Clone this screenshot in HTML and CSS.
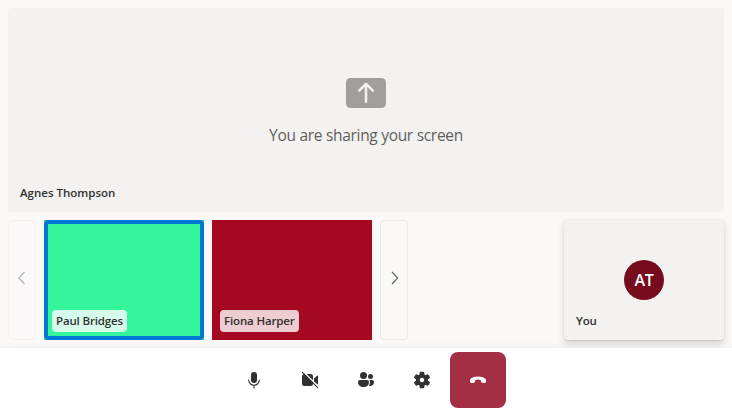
FILE: index.html
```html
<!DOCTYPE html>
<html lang="en">
<head>
<meta charset="utf-8">
<title>Call</title>
<link rel="stylesheet" href="styles.css">
</head>
<body>
<main class="call">
  <section class="stage">
    <div class="sharing">
      <svg class="share-icon" width="40" height="30" viewBox="0 0 40 30"><rect width="40" height="30" rx="4.5" fill="#a19f9d"/><path d="M20 23.8V6.2M13.2 12.6 20 5.8l6.8 6.8" fill="none" stroke="#f3f2f1" stroke-width="2.5" stroke-linecap="round" stroke-linejoin="round"/></svg>
      <p class="sharing-text">You are sharing your screen</p>
    </div>
    <span class="name stage-name">Agnes Thompson</span>
  </section>
  <section class="gallery">
    <button class="pager pager-off" aria-label="Previous"><svg width="9" height="14" viewBox="0 0 9 14"><path d="M6.500 1 .8 7l5.700 6"/></svg></button>
    <article class="tile tile-green"><span class="name badge">Paul Bridges</span></article>
    <article class="tile tile-red"><span class="name badge">Fiona Harper</span></article>
    <button class="pager" aria-label="Next"><svg width="9" height="14" viewBox="0 0 9 14"><path d="m2 1 5.700 6L2 13"/></svg></button>
    <article class="self"><span class="avatar">AT</span><span class="name self-name">You</span></article>
  </section>
  <nav class="controls">
    <button class="control" aria-label="Microphone"><svg width="20" height="20" viewBox="0 0 20 20"><rect x="7" y="2" width="6" height="11" rx="3" fill="#323130"/><path d="M4.700 10a5.300 5.300 0 0 0 10.600 0M10 15.300V18" fill="none" stroke="#323130" stroke-width="1.100" stroke-linecap="round"/></svg></button>
    <button class="control" aria-label="Camera off"><svg width="20" height="20" viewBox="0 0 20 20"><rect x="2" y="4" width="11" height="12" rx="2.500" fill="#323130"/><path d="m14 8.200 3.200-2.500q.8-.5.8.4v7.800q0 .9-.8.4L14 11.800Z" fill="#323130"/><path d="m3.400 1.700 15 15" stroke="#fff" stroke-width="1.500"/><path d="m2.400 2.400 15.300 15.300" stroke="#323130" stroke-width="1.100" stroke-linecap="round"/></svg></button>
    <button class="control" aria-label="People"><svg width="20" height="20" viewBox="0 0 20 20" fill="#323130"><circle cx="7.500" cy="5.500" r="3.500"/><circle cx="14.500" cy="6.500" r="2.500"/><path d="M4 10h7a2 2 0 0 1 2 2c0 3.200-2.300 5-5.500 5S2 15.200 2 12a2 2 0 0 1 2-2ZM13.400 10H16a2 2 0 0 1 2 2c0 2.500-1.600 4-4.400 4-.3 0-.6 0-.9-.1.8-1 1.300-2.300 1.300-3.900 0-.8-.2-1.400-.6-2Z"/></svg></button>
    <button class="control" aria-label="Settings"><svg width="20" height="20" viewBox="0 0 20 20"><g fill="#323130"><circle cx="10" cy="10" r="6.100"/><rect x="7.600" y="1.700" width="4.800" height="16.600" rx="1.300"/><rect x="7.600" y="1.700" width="4.800" height="16.600" rx="1.300" transform="rotate(60 10 10)"/><rect x="7.600" y="1.700" width="4.800" height="16.600" rx="1.300" transform="rotate(120 10 10)"/></g><circle cx="10" cy="10" r="2.200" fill="#fff"/></svg></button>
    <button class="control hangup" aria-label="Leave"><svg width="20" height="20" viewBox="0 0 20 20"><path d="m18 11-.2.9c-.2.8-1 1.300-1.800 1.200l-1.700-.3c-.7-.1-1.200-.7-1.300-1.300l-.4-1.500c-.8-.3-1.700-.5-2.600-.5s-1.800.2-2.600.5L7 11.500c-.1.600-.6 1.200-1.300 1.300l-1.700.3c-.8.100-1.600-.4-1.800-1.200L2 11c-.2-.8.100-1.700.7-2.200C4.300 7.400 7 6.600 10 6.600s5.700.8 7.300 2.200c.6.500.9 1.400.7 2.200Z" fill="#fff"/></svg></button>
  </nav>
</main>
</body>
</html>
```
FILE: styles.css
```css
* { box-sizing: border-box; }
body { margin: 0; background: #faf9f8; color: #323130; font-family: "Open Sans", "Noto Sans", sans-serif; }
button { margin: 0; padding: 0; border: 0; background: none; font: inherit; }
svg { display: block; }
.call { display: flex; flex-direction: column; height: 412px; overflow: hidden; }
.stage { position: relative; height: 204px; margin: 8px 8px 0; border-radius: 4px; background: #f3f2f1; }
.sharing { display: flex; flex-direction: column; align-items: center; padding-top: 70px; }
.sharing-text { margin: 16px 0 0; font-size: 15.5px; line-height: 22px; letter-spacing: -0.3px; color: #605e5c; white-space: nowrap; }
.name { font-size: 11.5px; line-height: 16px; font-weight: 600; letter-spacing: -0.15px; white-space: nowrap; }
.stage-name { position: absolute; left: 12px; bottom: 11px; letter-spacing: 0; }
.gallery { display: flex; gap: 8px; height: 120px; margin: 8px 8px 0; }
.pager { display: flex; align-items: center; justify-content: center; width: 28px; height: 120px; border: 1px solid #edebe9; border-radius: 4px; padding-bottom: 4px; }
.pager path { fill: none; stroke: #605e5c; stroke-width: 1.1; }
.pager-off { border-color: #f3f2f1; }
.pager-off path { stroke: #b3b0ad; }
.tile { display: flex; position: relative; align-items: flex-end; width: 160px; padding: 8px; }
.tile-green { background: #33f599; }
.tile-green::after { content: ""; position: absolute; inset: 0; border: 4px solid #0078d4; border-radius: 4px; }
.tile-red { background: #a50821; }
.badge { height: 22px; padding: 3px 4px; border-radius: 4px; background: rgba(255, 255, 255, .8); }
.self { display: flex; position: relative; align-items: center; justify-content: center; width: 160px; margin-left: auto; border-radius: 4px; background: #f3f2f1; box-shadow: 0 3.2px 7.2px rgba(0, 0, 0, .13), 0 .6px 1.8px rgba(0, 0, 0, .11); }
.avatar { width: 40px; height: 40px; border-radius: 50%; background: #750b1c; color: #fff; font-size: 16px; font-weight: 600; line-height: 40px; text-align: center; letter-spacing: -0.2px; }
.self-name { position: absolute; left: 12px; bottom: 11px; }
.controls { display: flex; justify-content: center; height: 64px; margin-top: 8px; padding: 4px 0; background: #fff; box-shadow: 0 0 8px rgba(0, 0, 0, .06); }
.control { display: flex; align-items: center; justify-content: center; width: 56px; height: 56px; }
.hangup { border-radius: 8px; background: #a42e43; }
```
